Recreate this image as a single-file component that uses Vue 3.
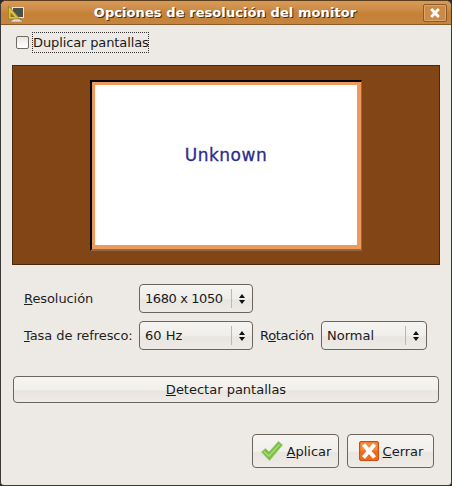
<script setup>
const title = 'Opciones de resolución del monitor'
</script>

<template>
  <div class="window">
    <header class="titlebar">
      <svg class="app-icon" width="18" height="18" viewBox="0 0 18 18">
        <rect x="6.500" y="3.500" width="11" height="10" fill="#48504e" stroke="#e8e6e0" />
        <path d="M2.500 2 L2.500 15 L14 15 Z" fill="#dcc040" stroke="#9a8220" stroke-width="0.8" />
        <path d="M4.500 8.500 L4.500 13 L9 13 Z" fill="#8a7620" />
        <path d="M7 15h7v1h2v2H5v-2h2z" fill="#dedcd6" stroke="#77736b" stroke-width="0.5" />
      </svg>
      <span class="title">{{ title }}</span>
      <button class="close-box" aria-label="Cerrar">
        <svg width="12" height="10" viewBox="0 0 12 10">
          <path d="M2.200 1 L9.800 9 M9.800 1 L2.200 9" stroke="#fff" stroke-width="2.800" fill="none" />
        </svg>
      </button>
    </header>

    <main class="content">
      <div class="check-row">
        <span class="checkbox"></span>
        <span class="check-label">Duplicar pantallas</span>
      </div>

      <div class="canvas">
        <div class="monitor">
          <div class="monitor-inner">Unknown</div>
        </div>
      </div>

      <div class="form">
        <div class="form-row">
          <label class="field-label"><u>R</u>esolución</label>
          <div class="combo combo-wide">
            <span class="combo-value digits">1680 x 1050</span>
            <span class="combo-arrows">
              <i class="up"></i><i class="down"></i>
            </span>
          </div>
        </div>
        <div class="form-row">
          <label class="field-label"><u>T</u>asa de refresco:</label>
          <div class="combo combo-wide">
            <span class="combo-value">60 Hz</span>
            <span class="combo-arrows">
              <i class="up"></i><i class="down"></i>
            </span>
          </div>
          <label class="rotation-label">R<u>o</u>tación</label>
          <div class="combo combo-narrow">
            <span class="combo-value">Normal</span>
            <span class="combo-arrows">
              <i class="up"></i><i class="down"></i>
            </span>
          </div>
        </div>
      </div>

      <button class="btn detect"><u>D</u>etectar pantallas</button>

      <div class="actions">
        <button class="btn action">
          <svg width="22" height="20" viewBox="0 0 22 20">
            <path d="M0.500 11 L4.500 7.500 L8 11 L17.500 0.500 L21.500 4 L8.500 19.500 Z" fill="#7cc043" stroke="#93cc62" stroke-width="0.8" stroke-linejoin="round" />
            <path d="M3 10.500 L8 15 L18.500 3.500" stroke="#a8dc7e" stroke-width="1.400" fill="none" />
          </svg>
          <span><u>A</u>plicar</span>
        </button>
        <button class="btn action">
          <svg width="20" height="20" viewBox="0 0 20 20">
            <rect x="0.500" y="0.500" width="19" height="19" rx="1.500" fill="#ee6a1c" stroke="#c9500f" />
            <rect x="1.500" y="1.500" width="17" height="8" fill="#f58a44" />
            <path d="M4.500 3.500 L15.500 16.500 M15.500 3.500 L4.500 16.500" stroke="#fff" stroke-width="4" fill="none" />
          </svg>
          <span><u>C</u>errar</span>
        </button>
      </div>
    </main>
  </div>
</template>

<style scoped>
.window {
  box-sizing: border-box;
  display: flex;
  flex-direction: column;
  width: 452px;
  height: 486px;
  border: 1px solid #3c3a36;
  border-top-color: #5a3d1c;
  border-radius: 6px 6px 4px 4px;
  background: #edeae5;
  overflow: hidden;
  font-family: 'DejaVu Sans', sans-serif;
  font-size: 13px;
  color: #1a1a1a;
}

.titlebar {
  display: flex;
  align-items: center;
  flex: 0 0 23px;
  padding: 0 4px 0 5px;
  border-bottom: 1px solid #8a5a28;
  background: linear-gradient(#d89a56 0, #cf8f4c 30%, #c48137 55%, #c6853f 100%);
}

.app-icon {
  flex: none;
}

.title {
  flex: 1;
  padding-left: 3px;
  text-align: center;
  white-space: nowrap;
  color: #fff;
  font-weight: 700;
  font-size: 13px;
  letter-spacing: 0.08px;
  text-shadow: 1px 1px 0 #4a3015;
}

.close-box {
  display: flex;
  align-items: center;
  justify-content: center;
  width: 24px;
  height: 18px;
  padding: 0;
  border: 1px solid #8a5a28;
  border-radius: 2px;
  background: #cb8a45;
  box-shadow: inset 0 0 0 1px #dba76d;
}

.content {
  display: flex;
  flex-direction: column;
  flex: 1;
  padding: 6px 11px 0;
  min-height: 0;
}

.check-row {
  display: flex;
  align-items: center;
  height: 22px;
  padding-left: 4px;
}

.checkbox {
  box-sizing: border-box;
  flex: none;
  width: 13px;
  height: 13px;
  margin-right: 3px;
  border: 1px solid #6f6a62;
  border-radius: 2px;
  background: linear-gradient(#e9e6e1, #fff);
}

.check-label {
  box-sizing: border-box;
  flex: none;
  width: 117px;
  padding: 2px 0 2px 1px;
  outline: 1px dotted #333;
  outline-offset: -1px;
  line-height: 17px;
  letter-spacing: -0.12px;
  white-space: nowrap;
}

.canvas {
  box-sizing: border-box;
  display: flex;
  justify-content: center;
  align-items: flex-start;
  height: 200px;
  margin-top: 12px;
  padding-top: 14px;
  border: 1px solid #4a2a0c;
  background: #824516;
}

.monitor {
  box-sizing: border-box;
  width: 272px;
  height: 171px;
  border-top: 2px solid #000;
  border-left: 2px solid #000;
  border-right: 1px solid #8f6a48;
  border-bottom: 2px solid #8f6a48;
  background: #ef9a5c;
}

.monitor-inner {
  box-sizing: border-box;
  display: flex;
  align-items: center;
  justify-content: center;
  height: 160px;
  margin: 3px 4px 0 3px;
  padding-bottom: 20px;
  background: #fff;
  color: #2c2c8c;
  font-size: 17px;
  letter-spacing: 0.5px;
  -webkit-text-stroke: 0.3px #2c2c8c;
}

.form {
  display: flex;
  flex-direction: column;
  gap: 8px;
  margin-top: 19px;
  padding-left: 12px;
}

.form-row {
  display: flex;
  align-items: center;
  height: 29px;
}

.field-label {
  width: 115px;
  color: #1f1f1f;
  letter-spacing: -0.08px;
}

.rotation-label {
  margin-left: 7px;
  width: 61px;
  letter-spacing: -0.3px;
}

.combo {
  box-sizing: border-box;
  display: flex;
  align-items: center;
  height: 29px;
  border: 1px solid #6b665d;
  border-radius: 4px;
  background: linear-gradient(#f6f4f1 0, #f0eeea 50%, #e9e6e1 55%, #eeebe7 100%);
}

.combo-wide {
  width: 114px;
}

.combo-narrow {
  width: 106px;
}

.combo-value {
  flex: 1;
  padding-left: 5px;
}

.digits {
  letter-spacing: -0.4px;
}

.combo-arrows {
  box-sizing: border-box;
  display: flex;
  flex-direction: column;
  align-items: center;
  justify-content: center;
  gap: 2px;
  width: 21px;
  height: 19px;
  border-left: 1px solid #bdb8b0;
}

.combo-arrows i {
  width: 0;
  height: 0;
  border-left: 3.500px solid transparent;
  border-right: 3.500px solid transparent;
}

.combo-arrows .up {
  border-bottom: 4px solid #111;
}

.combo-arrows .down {
  border-top: 4px solid #111;
}

.btn {
  box-sizing: border-box;
  border: 1px solid #6b665d;
  border-radius: 4px;
  background: linear-gradient(#f6f4f1 0, #f2f0ec 50%, #e9e6e1 55%, #eeebe7 100%);
  font-family: inherit;
  font-size: 13px;
  color: #1a1a1a;
  padding: 0;
}

.detect {
  width: 426px;
  height: 27px;
  margin: 26px 0 0 1px;
}

.actions {
  display: flex;
  justify-content: flex-end;
  gap: 8px;
  margin-top: 31px;
  padding-right: 6px;
}

.action {
  display: flex;
  align-items: center;
  justify-content: center;
  gap: 4px;
  width: 87px;
  height: 34px;
  padding-left: 1px;
}
</style>

<style>
html,
body {
  margin: 0;
  background: #2e2b27;
}
</style>
